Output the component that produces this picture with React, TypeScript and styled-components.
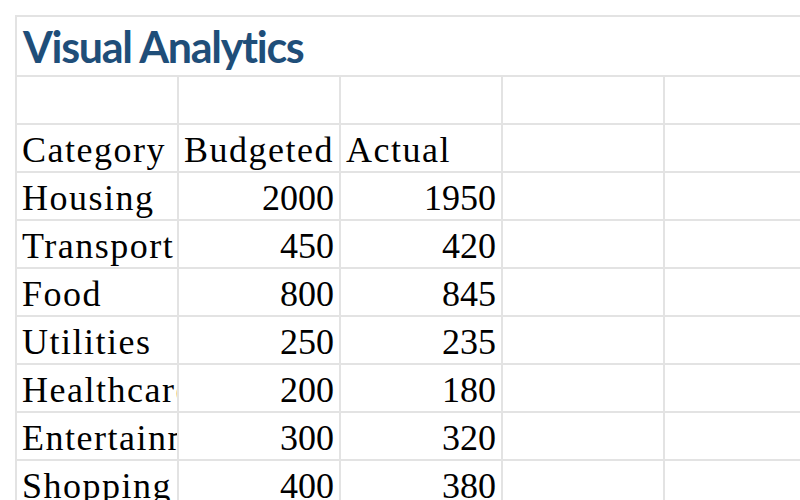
import React from "react";
import styled, { createGlobalStyle } from "styled-components";

const Global = createGlobalStyle`
  html, body { margin: 0; padding: 0; background: #ffffff; }
  body { width: 800px; height: 500px; overflow: hidden; }
`;

const Page = styled.div`
  padding: 15px 0 0 15px;
  width: 800px;
  height: 500px;
  box-sizing: border-box;
  overflow: hidden;
`;

const Sheet = styled.div`
  display: grid;
  grid-template-columns: repeat(5, 160px);
  grid-template-rows: 58px;
  grid-auto-rows: 46px;
  gap: 2px;
  padding: 2px;
  background: #e3e3e3;
  width: max-content;
`;

const TitleCell = styled.div`
  grid-column: 1 / -1;
  background: #ffffff;
  display: flex;
  align-items: flex-end;
  padding-left: 6px;
  box-sizing: border-box;
  font-family: Lato, "Open Sans", sans-serif;
  font-weight: 700;
  font-size: 43px;
  line-height: 56px;
  letter-spacing: -1.3px;
  font-variant-ligatures: none;
  color: #1f4e79;
  white-space: nowrap;
  overflow: hidden;
`;

const Cell = styled.div<{ $align?: "left" | "right" }>`
  background: #ffffff;
  display: flex;
  align-items: flex-end;
  justify-content: ${(p) => (p.$align === "right" ? "flex-end" : "flex-start")};
  padding: 0 5px;
  box-sizing: border-box;
  font-family: "Liberation Serif", "Times New Roman", serif;
  font-size: 36px;
  line-height: 42px;
  letter-spacing: ${(p) => (p.$align === "right" ? "0" : "1.5px")};
  color: #000000;
  white-space: nowrap;
  overflow: hidden;
`;

const rows: [string, number, number][] = [
  ["Housing", 2000, 1950],
  ["Transport", 450, 420],
  ["Food", 800, 845],
  ["Utilities", 250, 235],
  ["Healthcare", 200, 180],
  ["Entertainment", 300, 320],
  ["Shopping", 400, 380],
];

export default function App() {
  return (
    <>
      <Global />
      <Page>
        <Sheet>
          <TitleCell>Visual Analytics</TitleCell>
          {[0, 1, 2, 3, 4].map((i) => (
            <Cell key={`e${i}`} />
          ))}
          <Cell>Category</Cell>
          <Cell>Budgeted</Cell>
          <Cell>Actual</Cell>
          <Cell />
          <Cell />
          {rows.map(([name, b, a]) => (
            <React.Fragment key={name}>
              <Cell>{name}</Cell>
              <Cell $align="right">{b}</Cell>
              <Cell $align="right">{a}</Cell>
              <Cell />
              <Cell />
            </React.Fragment>
          ))}
        </Sheet>
      </Page>
    </>
  );
}
